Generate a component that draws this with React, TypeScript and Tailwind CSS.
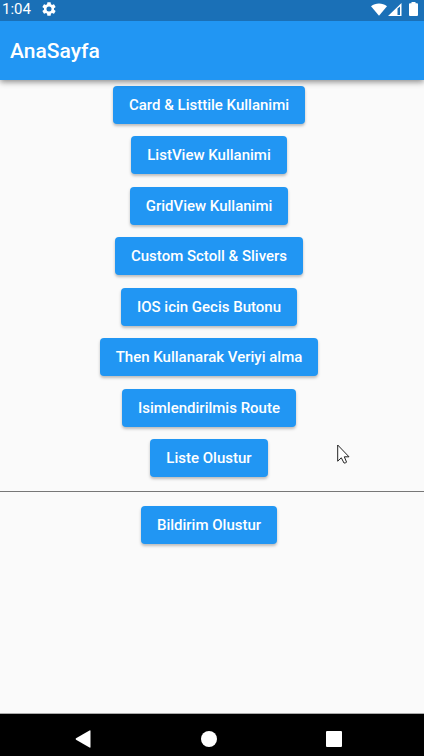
const pages = [
  "Card & Listtile Kullanimi",
  "ListView Kullanimi",
  "GridView Kullanimi",
  "Custom Sctoll & Slivers",
  "IOS icin Gecis Butonu",
  "Then Kullanarak Veriyi alma",
  "Isimlendirilmis Route",
  "Liste Olustur",
];

function RaisedButton({ label }: { label: string }) {
  return (
    <button
      type="button"
      className="h-[38px] rounded-[4px] bg-[#2196f3] px-[16px] text-[15px] font-medium leading-5 text-white shadow-[0_2px_3px_rgba(0,0,0,0.25)] even:mb-px"
    >
      {label}
    </button>
  );
}

function StatusBar() {
  return (
    <div className="flex h-[21px] items-center bg-[#1a70b7] pb-[3px] pl-[2px] pr-[6px] text-white">
      <span className="text-[15px] leading-[18px]">1:04</span>
      <svg viewBox="2 2 20 20" className="ml-[11px] size-[14px]" fill="currentColor" aria-hidden="true">
        <path d="M19.14 12.94c.04-.3.06-.61.06-.94 0-.32-.02-.64-.07-.94l2.03-1.58a.49.49 0 0 0 .12-.61l-1.92-3.32a.49.49 0 0 0-.59-.22l-2.39.96a7 7 0 0 0-1.62-.94l-.36-2.54A.48.48 0 0 0 13.92 2.4h-3.84a.48.48 0 0 0-.47.41l-.36 2.54c-.59.24-1.13.57-1.62.94l-2.39-.96a.48.48 0 0 0-.59.22L2.74 8.87a.48.48 0 0 0 .12.61l2.03 1.58c-.05.3-.09.63-.09.94s.02.64.07.94l-2.03 1.58a.49.49 0 0 0-.12.61l1.92 3.32c.12.22.37.29.59.22l2.39-.96c.5.38 1.03.7 1.62.94l.36 2.54c.05.24.24.41.48.41h3.84c.24 0 .44-.17.47-.41l.36-2.54c.59-.24 1.13-.56 1.62-.94l2.39.96c.22.08.47 0 .59-.22l1.92-3.32a.48.48 0 0 0-.12-.61zM12 15.6a3.6 3.6 0 1 1 0-7.2 3.6 3.6 0 0 1 0 7.2z" />
      </svg>
      <div className="ml-auto flex items-center" aria-hidden="true">
        <svg viewBox="0 0 16 13" className="h-[13px] w-[16px]" fill="currentColor">
          <path d="M0 3.2C4.500-.4 11.500-.4 16 3.200L8 12.700z" />
        </svg>
        <svg viewBox="0 0 14 13" className="ml-px h-[13px] w-[14px]" fill="currentColor">
          <path fillRule="evenodd" d="M0 13L13.500 0V13zM9.500 5.500V12H12V3.500z" />
        </svg>
        <svg viewBox="0 0 9 14" className="ml-[7px] h-[14px] w-[9px]" fill="currentColor">
          <path d="M2.500 0h4v1.300h1.500q1 0 1 1V13q0 1-1 1H1q-1 0-1-1V2.300q0-1 1-1h1.500z" />
        </svg>
      </div>
    </div>
  );
}

function NavigationBar() {
  return (
    <nav className="flex h-[43px] items-center justify-between border-t border-[#aaa] bg-black pl-[75px] pr-[82px] pt-[8px] text-white">
      <button type="button" aria-label="Back">
        <svg viewBox="0 0 16 18" className="h-[18px] w-[16px]" fill="currentColor">
          <path d="M14.500.5Q15.500 0 15.500 1V17Q15.500 18 14.500 17.500L1 9.700Q.2 9 1 8.300z" />
        </svg>
      </button>
      <button type="button" aria-label="Home" className="size-[16px] rounded-full bg-white" />
      <button type="button" aria-label="Recent apps" className="size-[16px] rounded-[1px] bg-white" />
    </nav>
  );
}

export default function App() {
  return (
    <div className="relative flex min-h-screen flex-col bg-[#fafafa] font-['Roboto',sans-serif]">
      <header className="z-10 bg-[#2196f3] text-white shadow-[0_2px_6px_rgba(0,0,0,0.45)]">
        <StatusBar />
        <div className="flex h-[59px] items-center px-[10px]">
          <h1 className="text-[21px] font-medium leading-6">AnaSayfa</h1>
        </div>
      </header>
      <main className="flex-1 pt-[6px]">
        <div className="flex flex-col items-center gap-[12px] pr-[6px]">
          {pages.map((label) => (
            <RaisedButton key={label} label={label} />
          ))}
        </div>
        <hr className="mb-[14px] mt-[13px] border-t border-[#777]" />
        <div className="flex flex-col items-center pr-[6px]">
          <RaisedButton label="Bildirim Olustur" />
        </div>
      </main>
      <NavigationBar />
      <svg viewBox="0 0 13 20" className="absolute left-[337px] top-[444px] z-20 h-[20px] w-[13px]" aria-hidden="true">
        <path d="M.7 1V17.200L4.300 13.800L7 19Q8.800 19.500 9.500 18L7.300 12.800H12z" fill="#fff" stroke="#222" strokeWidth="1" />
      </svg>
    </div>
  );
}
